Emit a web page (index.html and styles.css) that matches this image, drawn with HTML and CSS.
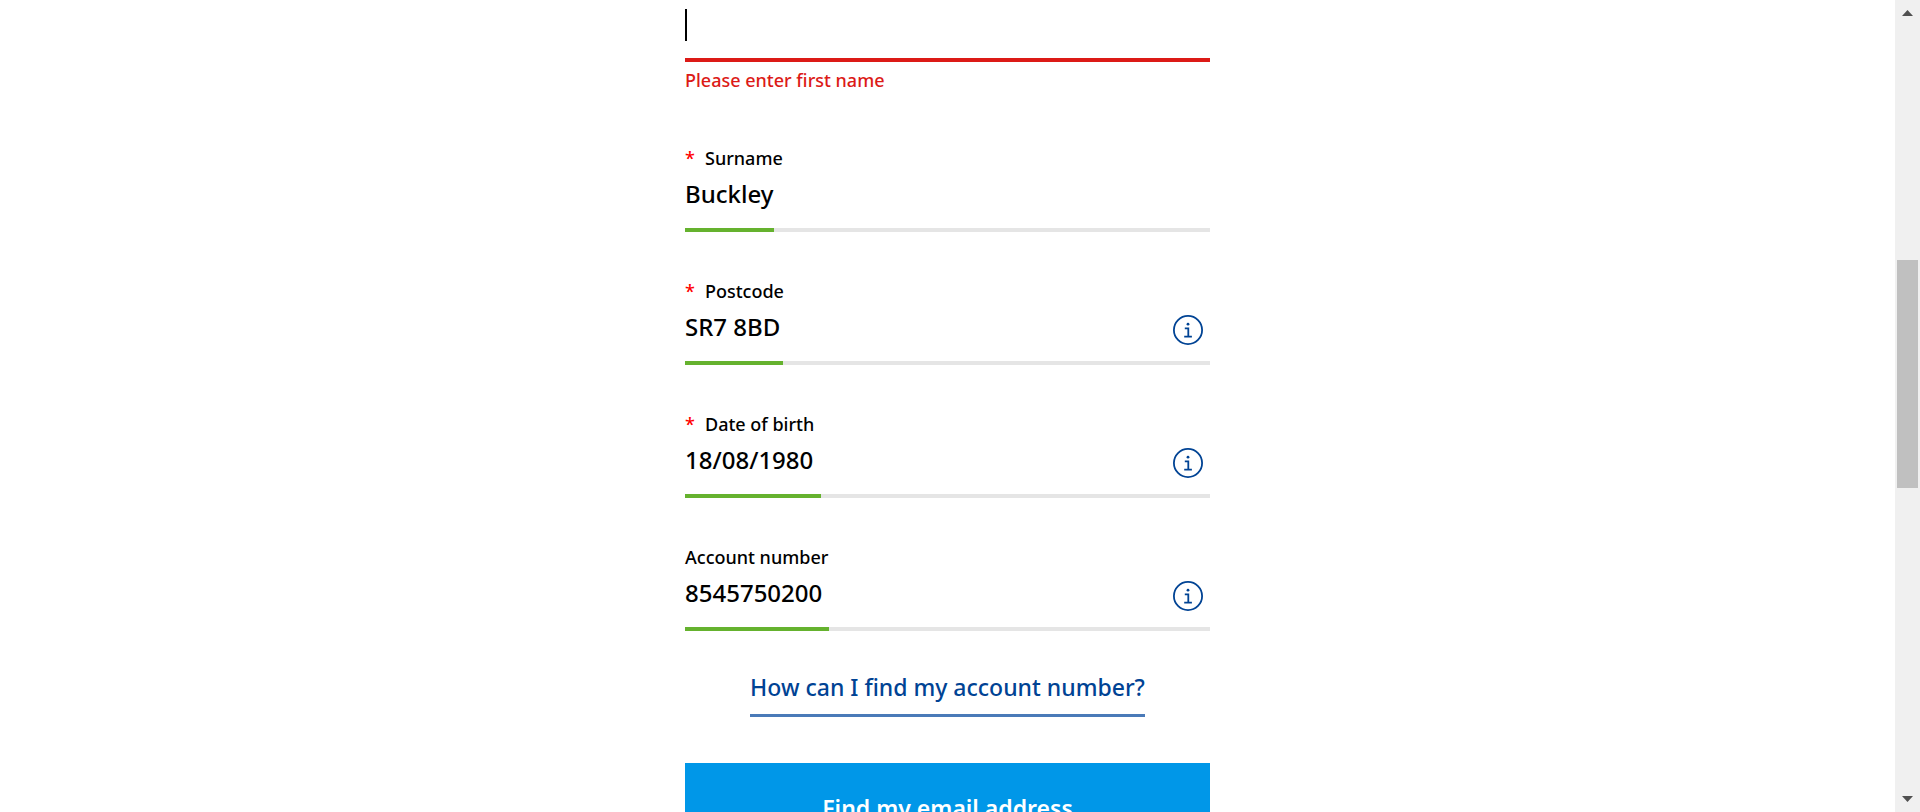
FILE: index.html
```
<!DOCTYPE html>
<html lang="en">
<head>
<meta charset="utf-8">
<title>Find my email address</title>
<link rel="stylesheet" href="styles.css">
</head>
<body>
<svg class="sprite" aria-hidden="true">
  <symbol id="info" viewBox="0 0 30 30">
    <circle cx="15" cy="15" r="14.1" fill="none" stroke="currentColor" stroke-width="1.8"/>
    <circle cx="15" cy="9.2" r="1.4" fill="currentColor"/>
    <path d="M11.8 13.4h3.5v8.3M11.2 21.7h7.7" fill="none" stroke="currentColor" stroke-width="1.8"/>
  </symbol>
</svg>
<div class="page">
  <main class="content">
    <form class="form">
      <div class="field">
        <div class="control control-error">
          <input class="input" id="first-name" type="text" aria-label="First name" aria-describedby="first-name-error">
          <span class="caret"></span>
        </div>
        <p class="error" id="first-name-error">Please enter first name</p>
      </div>
      <div class="field">
        <label class="label" for="surname"><span class="required">*</span>Surname</label>
        <div class="control">
          <input class="input" id="surname" type="text" value="Buckley">
          <span class="filled" style="width:89px"></span>
        </div>
      </div>
      <div class="field">
        <label class="label" for="postcode"><span class="required">*</span>Postcode</label>
        <div class="control">
          <input class="input" id="postcode" type="text" value="SR7 8BD">
          <button class="info" type="button" aria-label="About postcode"><svg class="icon"><use href="#info"/></svg></button>
          <span class="filled" style="width:98px"></span>
        </div>
      </div>
      <div class="field">
        <label class="label" for="dob"><span class="required">*</span>Date of birth</label>
        <div class="control">
          <input class="input" id="dob" type="text" value="18/08/1980">
          <button class="info" type="button" aria-label="About date of birth"><svg class="icon"><use href="#info"/></svg></button>
          <span class="filled" style="width:136px"></span>
        </div>
      </div>
      <div class="field">
        <label class="label" for="account">Account number</label>
        <div class="control">
          <input class="input" id="account" type="text" value="8545750200">
          <button class="info" type="button" aria-label="About account number"><svg class="icon"><use href="#info"/></svg></button>
          <span class="filled" style="width:144px"></span>
        </div>
      </div>
      <a class="help" href="#">How can I find my account number?</a>
      <button class="submit" type="submit">Find my email address</button>
    </form>
  </main>
  <div class="scrollbar" aria-hidden="true">
    <svg class="arrow" viewBox="0 0 11 6"><path d="M0 6 5.5 0 11 6z"/></svg>
    <div class="track"><div class="thumb"></div></div>
    <svg class="arrow" viewBox="0 0 11 6"><path d="M0 0 5.5 6 11 0z"/></svg>
  </div>
</div>
</body>
</html>
```
FILE: styles.css
```
* { box-sizing: border-box; }

body {
  margin: 0;
  background: #fff;
  color: #000;
  font-family: "Noto Sans", "Open Sans", sans-serif;
  font-weight: 500;
}

.sprite { display: none; }

.page {
  display: grid;
  grid-template-columns: 1fr 25px;
  height: 100vh;
  overflow: hidden;
}

.content { overflow: hidden; }

.form {
  display: flex;
  flex-direction: column;
  gap: 47px;
  max-width: 525px;
  margin: 0 auto;
}

.label,
.error {
  display: block;
  margin: 0;
  font-size: 18px;
  line-height: 24px;
}

.error {
  padding: 6px 0 7px;
  color: #dc1a17;
}

.required {
  display: inline-block;
  width: 20px;
  color: #f00;
}

.control {
  position: relative;
  display: flex;
  align-items: flex-end;
  padding: 8px 7px 18px 0;
  border-bottom: 4px solid #e5e5e5;
}

.control-error { border-bottom-color: #dc1a17; }

.input {
  flex: 1;
  min-width: 0;
  height: 32px;
  padding: 0;
  border: 0;
  outline: 0;
  background: none;
  color: inherit;
  font: inherit;
  font-size: 24px;
  line-height: 32px;
}

.caret {
  position: absolute;
  top: 9px;
  left: 0;
  width: 2px;
  height: 32px;
  background: #000;
}

.filled {
  position: absolute;
  bottom: -4px;
  left: 0;
  height: 4px;
  background: #65b22e;
}

.info {
  height: 30px;
  margin-bottom: -2px;
  padding: 0;
  border: 0;
  background: none;
  color: #004394;
}

.icon {
  display: block;
  width: 30px;
  height: 30px;
}

.help {
  align-self: center;
  margin: -7px 0 -1px;
  padding-bottom: 11px;
  border-bottom: 3px solid #4a7ab8;
  color: #004394;
  font-size: 23px;
  line-height: 32px;
  text-decoration: none;
}

.submit {
  padding: 29px 24px;
  border: 0;
  background: #0097e8;
  color: #fff;
  font: inherit;
  font-size: 23px;
  font-weight: 600;
  line-height: 32px;
}

.scrollbar {
  display: flex;
  flex-direction: column;
  align-items: center;
  padding: 10px 2px;
  background: #f0f0f0;
}

.arrow {
  width: 11px;
  height: 6px;
  fill: #505050;
}

.track {
  flex: 1;
  width: 100%;
  padding: 244px 0;
}

.thumb {
  height: 228px;
  background: #c0c0c0;
}
```
